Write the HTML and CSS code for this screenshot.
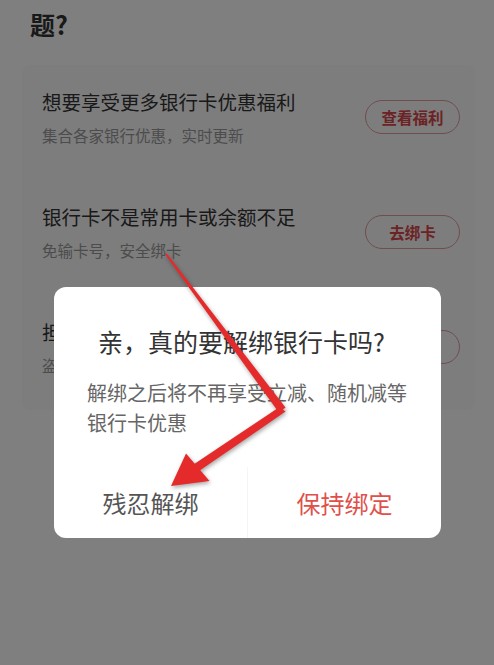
FILE: index.html
```html
<!DOCTYPE html>
<html>

<head>
    <title>解绑银行卡</title>
    <link rel="stylesheet" href="styles.css">
</head>

<body>

    <div class="page">
        <h2 class="question">绑定银行卡时是否遇到了以下这些问题?</h2>

        <div class="card">
            <div class="row">
                <div class="info">
                    <div class="row-title">想要享受更多银行卡优惠福利</div>
                    <div class="row-sub">集合各家银行优惠，实时更新</div>
                </div>
                <button class="pill">查看福利</button>
            </div>
            <div class="row">
                <div class="info">
                    <div class="row-title">银行卡不是常用卡或余额不足</div>
                    <div class="row-sub">免输卡号，安全绑卡</div>
                </div>
                <button class="pill">去绑卡</button>
            </div>
            <div class="row">
                <div class="info">
                    <div class="row-title">担心银行卡被盗刷</div>
                    <div class="row-sub">盗刷险保障，资金安全</div>
                </div>
                <button class="pill">去开通</button>
            </div>
        </div>
    </div>

    <div class="mask">
        <div class="dialog">
            <div class="dialog-title">亲，真的要解绑银行卡吗?</div>
            <div class="dialog-text">解绑之后将不再享受立减、随机减等银行卡优惠</div>
            <div class="dialog-actions">
                <div class="action cancel">残忍解绑</div>
                <div class="action keep">保持绑定</div>
            </div>
        </div>
    </div>

    <!-- red annotation arrow drawn over the screenshot -->
    <svg class="arrow" width="494" height="665" viewBox="0 0 494 665">
        <polygon points="165.2,254.6 166.8,253.4 285.5,407.6 278.8,412.6" fill="#e42a2a"/>
        <polygon points="285.5,411.6 279.5,407 193.5,464.5 199,471" fill="#e42a2a"/>
        <polygon points="171,486 186,453.5 209.5,481" fill="#e42a2a"/>
    </svg>

</body>
</html>
```

FILE: styles.css
```css
body {
    margin: 0;
    background: #fff;
    font-family: "Noto Sans CJK SC", "Noto Sans", sans-serif;
    height: 665px;
    overflow: hidden;
}
.page {
    padding: 0 19px 0 22px;
}
.question {
    margin: -36px 0 0 8px;
    width: 410px;
    font-size: 25px;
    line-height: 40px;
    font-weight: bold;
    color: #333;
}
.card {
    margin-top: 21px;
    background: #fbfafa;
    border-radius: 8px;
}
.row {
    display: flex;
    align-items: center;
    justify-content: space-between;
    padding: 23px 15px 34px 20px;
}
.row-title {
    font-size: 19.5px;
    line-height: 28px;
    color: #333;
}
.row-sub {
    margin-top: 8px;
    font-size: 15.5px;
    line-height: 22px;
    color: #999;
}
.pill {
    width: 95px;
    height: 34px;
    border: 1px solid #e29a9a;
    border-radius: 17px;
    background: transparent;
    color: #d8464a;
    font-family: inherit;
    font-size: 15.5px;
    font-weight: bold;
    padding: 0;
}
.mask {
    position: fixed;
    top: 0;
    left: 0;
    right: 0;
    bottom: 0;
    background: rgba(0, 0, 0, 0.5);
    display: flex;
    flex-direction: column;
    align-items: center;
    padding-top: 287px;
}
.dialog {
    width: 387px;
    margin-left: 1px;
    background: #fff;
    border-radius: 12px;
}
.dialog-title {
    padding: 37px 20px 0 44px;
    font-size: 25px;
    line-height: 34px;
    color: #333;
}
.dialog-text {
    margin-top: 20px;
    padding: 0 30px 0 33px;
    font-size: 20px;
    line-height: 30px;
    color: #666;
}
.dialog-actions {
    display: flex;
    margin-top: 29px;
    height: 71px;
}
.action {
    flex: 1;
    display: flex;
    align-items: center;
    justify-content: center;
    font-size: 24px;
}
.cancel {
    color: #555;
    border-right: 1px solid #f5f5f5;
}
.keep {
    color: #e0504a;
}
.arrow {
    position: absolute;
    top: 0;
    left: 0;
    filter: drop-shadow(1px 2px 2px rgba(0, 0, 0, 0.35));
}
```
